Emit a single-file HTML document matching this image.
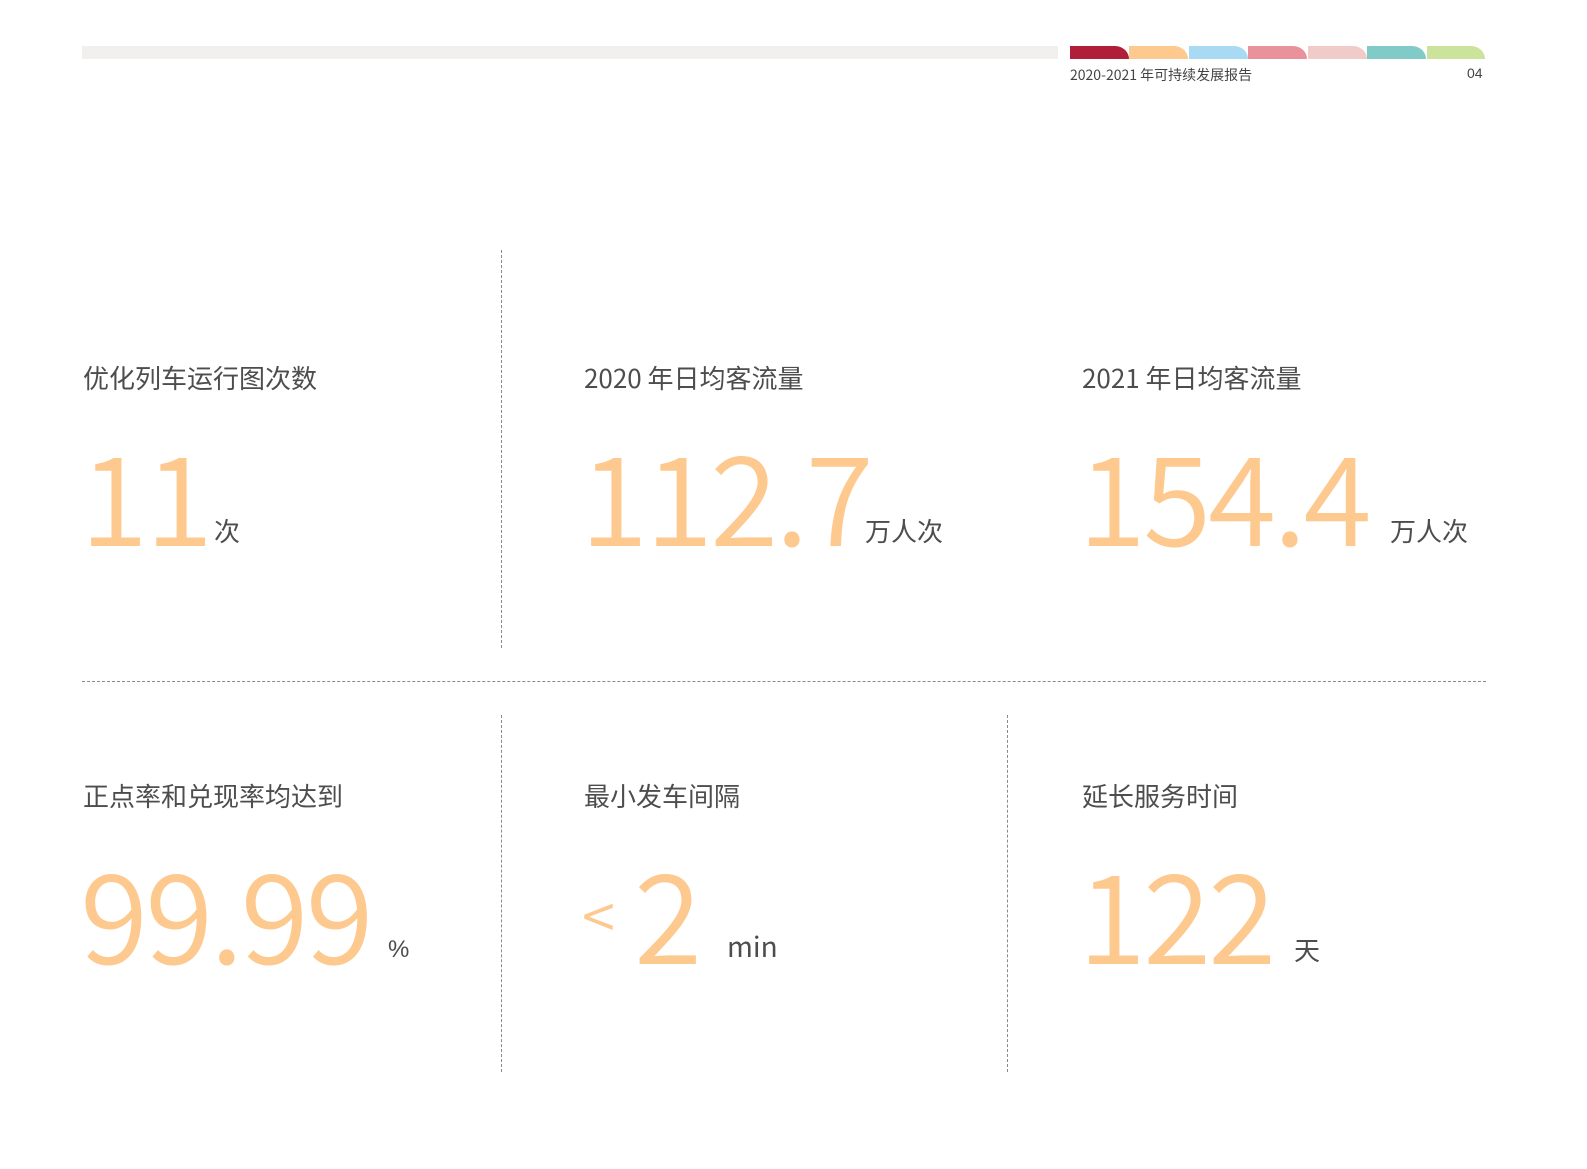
<!DOCTYPE html>
<html><head><meta charset="utf-8"><style>
body{margin:0;width:1587px;height:1169px;background:#fff;position:relative;overflow:hidden;font-family:"Liberation Sans","Noto Sans CJK SC",sans-serif;color:#4a4a4a}
.a{position:absolute;white-space:nowrap}
.tab{position:absolute;top:46px;height:13px;width:59px;border-top-right-radius:14px 13px}
.lbl{font-size:26px;color:#4d4d4d;font-family:"Noto Sans CJK SC","Liberation Sans",sans-serif}
.num{font-size:124px;color:#fdc98f;letter-spacing:-3px;line-height:1;font-family:"Noto Sans CJK SC",sans-serif;font-weight:350}
.unit{font-size:26px;color:#4d4d4d;font-family:"Noto Sans CJK SC",sans-serif}
.v{position:absolute;width:0;border-left:1.5px dashed #8a8a8a}
</style></head><body>
<div class="a" style="left:82px;top:46px;width:976px;height:13px;background:#f1f0ee"></div>
<div class="tab" style="left:1070px;background:#b01e3a"></div>
<div class="tab" style="left:1129px;background:#fdc98f"></div>
<div class="tab" style="left:1189px;background:#a9daf3"></div>
<div class="tab" style="left:1248px;background:#e9929c"></div>
<div class="tab" style="left:1308px;background:#f0cbc8"></div>
<div class="tab" style="left:1367px;background:#80cbc8"></div>
<div class="tab" style="left:1427px;background:#cbe39a;width:58px"></div>
<div class="a" style="left:1070px;top:65px;font-size:14px;color:#444;font-family:'Noto Sans CJK SC',sans-serif">2020-2021 年可持续发展报告</div>
<div class="a" style="left:1467px;top:65px;font-size:14px;color:#444">04</div>

<div class="v" style="left:501px;top:250px;height:398px"></div>
<div class="v" style="left:501px;top:715px;height:357px"></div>
<div class="v" style="left:1007px;top:715px;height:357px"></div>
<div class="a" style="left:82px;top:681px;width:1404px;border-top:1.5px dashed #8a8a8a"></div>

<div class="a lbl" style="left:83px;top:359px">优化列车运行图次数</div>
<div class="a lbl" style="left:584px;top:359px">2020 年日均客流量</div>
<div class="a lbl" style="left:1082px;top:359px">2021 年日均客流量</div>
<div class="a num" style="left:80px;top:430px">11</div>
<div class="a unit" style="left:214px;top:512px">次</div>
<div class="a num" style="left:580px;top:430px">112.7</div>
<div class="a unit" style="left:865px;top:512px">万人次</div>
<div class="a num" style="left:1078px;top:430px">154.4</div>
<div class="a unit" style="left:1390px;top:512px">万人次</div>

<div class="a lbl" style="left:83px;top:777px">正点率和兑现率均达到</div>
<div class="a lbl" style="left:584px;top:777px">最小发车间隔</div>
<div class="a lbl" style="left:1082px;top:777px">延长服务时间</div>
<div class="a num" style="left:80px;top:848px">99.99</div>
<div class="a" style="left:388px;top:936px;font-size:24px;color:#4d4d4d">%</div>
<div class="a" style="left:582px;top:884px;font-size:60px;color:#fdc98f;font-family:'Noto Sans CJK SC',sans-serif;font-weight:350;line-height:1">&lt;</div>
<div class="a num" style="left:634px;top:848px">2</div>
<div class="a" style="left:727px;top:926px;font-size:28px;color:#4d4d4d;font-family:'Noto Sans CJK SC',sans-serif">min</div>
<div class="a num" style="left:1078px;top:848px">122</div>
<div class="a unit" style="left:1294px;top:931px">天</div>
</body></html>
